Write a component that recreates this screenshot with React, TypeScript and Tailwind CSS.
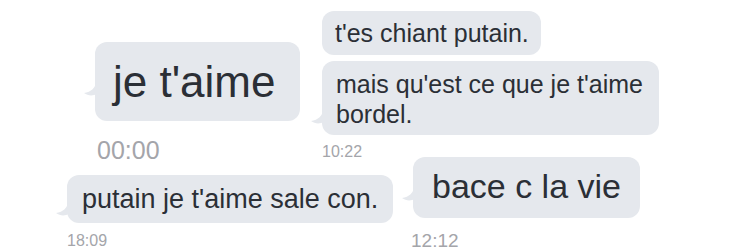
import React from 'react';

const Tail: React.FC<{ className: string }> = ({ className }) => (
    <svg className={`absolute ${className}`} width="14" height="16" viewBox="0 0 14 16">
        <path d="M13 0 C13 7 8 11 1 12 C5 15 10 15 14 13 L14 0 Z" fill="#e5e8ed" />
    </svg>
);

const Bubble: React.FC<{ className: string; tail?: string; children: React.ReactNode }> = ({ className, tail, children }) => (
    <div className={`relative shrink-0 rounded-[12px] bg-[#e5e8ed] text-[#2b2f36] ${className}`}>
        {tail && <Tail className={tail} />}
        {children}
    </div>
);

export default function App() {
    return (
        <div className="w-[750px] h-[250px] overflow-hidden bg-white font-['Liberation_Sans',Arial,sans-serif] flex flex-col">
            {/* top strip */}
            <div className="h-[152px] flex shrink-0">
                <div className="ml-[95px] mt-[42px] flex flex-col">
                    <Bubble className="w-[205px] h-[79px] flex items-center pl-[18px] text-[44px]" tail="-left-[12px] bottom-[24px]">
                        je t'aime
                    </Bubble>
                    <div className="shrink-0 mt-[17px] ml-[2px] text-[25px] leading-[25px] text-[#a4a5aa]">00:00</div>
                </div>
                <div className="ml-[22px] mt-[11px] flex flex-col items-start">
                    <Bubble className="w-[219px] h-[44px] pl-[13px] pt-[8px] text-[25px] leading-[28px] rounded-[10px]">
                        t'es chiant putain.
                    </Bubble>
                    <Bubble className="mt-[6px] w-[337px] h-[74px] pl-[14px] pt-[8px] text-[25px] leading-[30px] rounded-[10px]" tail="-left-[12px] bottom-[10px]">
                        mais qu'est ce que je t'aime
                        <br />
                        bordel.
                    </Bubble>
                    <div className="shrink-0 mt-[9px] text-[16px] leading-[16px] text-[#a4a5aa]">10:22</div>
                </div>
            </div>
            {/* bottom strip */}
            <div className="h-[98px] flex shrink-0">
                <div className="ml-[67px] mt-[23px] flex flex-col">
                    <Bubble className="w-[326px] h-[48px] pl-[15px] pt-[9px] text-[27px] leading-[30px] rounded-[10px]" tail="-left-[12px] bottom-[6px]">
                        putain je t'aime sale con.
                    </Bubble>
                    <div className="shrink-0 mt-[11px] text-[16px] leading-[14px] text-[#a4a5aa]">18:09</div>
                </div>
                <div className="ml-[20px] mt-[5px] flex flex-col">
                    <Bubble className="w-[227px] h-[61px] pl-[19px] pt-[11px] text-[34px] leading-[36px]" tail="-left-[12px] bottom-[16px]">
                        bace c la vie
                    </Bubble>
                    <div className="shrink-0 mt-[14px] -ml-[2px] text-[19px] leading-[17px] text-[#a4a5aa]">12:12</div>
                </div>
            </div>
        </div>
    );
}
